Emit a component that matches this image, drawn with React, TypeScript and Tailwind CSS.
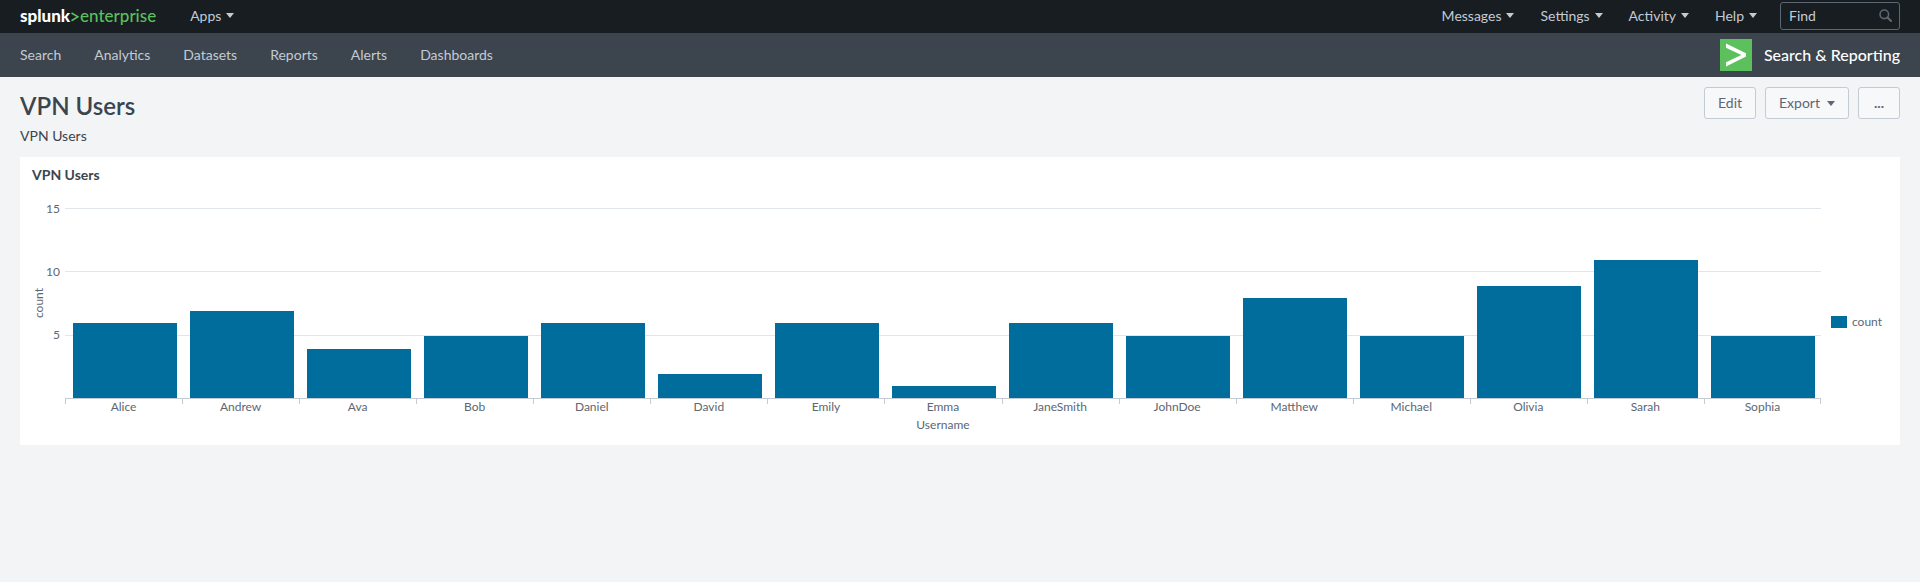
import React from "react";

const navItems = ["Search", "Analytics", "Datasets", "Reports", "Alerts", "Dashboards"];
const menus = ["Messages", "Settings", "Activity", "Help"];

const data = [
  { name: "Alice", count: 6 },
  { name: "Andrew", count: 7 },
  { name: "Ava", count: 4 },
  { name: "Bob", count: 5 },
  { name: "Daniel", count: 6 },
  { name: "David", count: 2 },
  { name: "Emily", count: 6 },
  { name: "Emma", count: 1 },
  { name: "JaneSmith", count: 6 },
  { name: "JohnDoe", count: 5 },
  { name: "Matthew", count: 8 },
  { name: "Michael", count: 5 },
  { name: "Olivia", count: 9 },
  { name: "Sarah", count: 11 },
  { name: "Sophia", count: 5 },
];

const axisMax = 15;
const gridValues = [15, 10, 5];

// Bar height in whole pixels, one pixel short so that it stays under its grid line.
const barHeight = (count: number) => Math.round((count / axisMax) * 189 - 1);

function Caret() {
  return (
    <svg width="8" height="5" viewBox="0 0 8 5" fill="currentColor" aria-hidden="true">
      <path d="M0 0h8L4 5z" />
    </svg>
  );
}

function MenuButton({ label }: { label: string }) {
  return (
    <button type="button" className="flex items-center gap-[5px] text-[#c3cbd4]">
      {label}
      <Caret />
    </button>
  );
}

function Logo() {
  return (
    <a href="#home" className="flex items-center text-[17px] leading-5">
      <span className="font-black text-white">splunk</span>
      <svg width="8" height="10" viewBox="0 0 8 10" fill="none" stroke="#5cc05c" strokeWidth="1.6" aria-hidden="true" className="mx-px mt-0.5">
        <path d="M0.5 1L7 4.8L0.5 8.8" />
      </svg>
      <span className="font-medium text-[#5cc05c]">enterprise</span>
    </a>
  );
}

function TopBar() {
  return (
    <header className="flex h-[33px] items-center justify-between bg-[#171d21] px-5 pb-px">
      <div className="flex items-center gap-[34px] pb-px">
        <Logo />
        <MenuButton label="Apps" />
      </div>
      <div className="flex items-center">
        <div className="flex items-center gap-[26px] pr-[23px] pb-px">
          {menus.map((m) => (
            <MenuButton key={m} label={m} />
          ))}
        </div>
        <label className="flex h-7 w-[120px] items-center rounded-[3px] border border-[#5c6773] pr-[7px] pb-px pl-2">
          <input
            type="text"
            aria-label="Find"
            placeholder="Find"
            className="w-0 flex-1 bg-transparent text-white outline-none placeholder:text-[#c3cbd4]"
          />
          <svg width="13" height="13" viewBox="0 0 13 13" fill="none" stroke="#5c6773" aria-hidden="true">
            <circle cx="5.3" cy="5.3" r="4.3" strokeWidth="1.6" />
            <path d="M8.5 8.5L12 12" strokeWidth="2.2" strokeLinecap="round" />
          </svg>
        </label>
      </div>
    </header>
  );
}

function AppNav() {
  return (
    <nav className="flex h-11 items-center justify-between bg-[#3c444d] px-5">
      <ul className="flex items-center gap-[33px]">
        {navItems.map((n) => (
          <li key={n}>
            <a href={`#${n.toLowerCase()}`} className="text-[#c3cbd4]">
              {n}
            </a>
          </li>
        ))}
      </ul>
      <a href="#app" className="flex items-center gap-3 text-base font-medium text-white">
        <svg width="32" height="32" viewBox="0 0 32 32" aria-hidden="true">
          <path fill="#5cc05c" d="M0 0h32v32H0z" />
          <path fill="#fff" d="M6 4.5L26 14.2V17.6L6 27.5V23.3L21.3 15.9L6 8.7z" />
        </svg>
        Search &amp; Reporting
      </a>
    </nav>
  );
}

function ActionButton({ children }: { children: React.ReactNode }) {
  return (
    <button
      type="button"
      className="flex h-8 items-center gap-[7px] rounded-[3px] border border-[#c3cbd4] bg-[#f7f8fa] px-[13px] text-[#5c6773]"
    >
      {children}
    </button>
  );
}

function ColumnChart() {
  return (
    <div className="flex pr-[18px] pl-3 text-xs leading-4 text-[#5c6773]">
      <div className="flex h-[190px] w-3.5 items-center justify-center">
        <span className="rotate-180 [writing-mode:vertical-rl]">count</span>
      </div>
      <div className="flex h-[190px] w-[14px] flex-col">
        {gridValues.map((v) => (
          <div key={v} className="flex-1">
            <div className="flex h-px items-center justify-end">{v}</div>
          </div>
        ))}
      </div>
      <div className="ml-[5px] flex-1">
        <div className="relative h-[190px]">
          <div className="absolute inset-0 flex flex-col">
            {gridValues.map((v) => (
              <div key={v} className="flex-1 border-t border-[#e1e6eb]" />
            ))}
          </div>
          <div className="relative flex h-full items-end pr-px">
            {data.map((d) => (
              <div key={d.name} className="flex h-full flex-1 items-end pr-[5px] pl-2">
                <div className="w-full bg-[#006d9c]" style={{ height: `${barHeight(d.count)}px` }} />
              </div>
            ))}
          </div>
        </div>
        <div className="flex border-t border-[#c3cbd4]">
          {data.map((d) => (
            <div key={d.name} className="group flex-1">
              <div className="h-[5px] border-l border-[#c3cbd4] group-last:border-r" />
              <div className="-mt-[5px] text-center">{d.name}</div>
            </div>
          ))}
        </div>
        <div className="mt-0.5 text-center">Username</div>
      </div>
      <div className="ml-2.5 flex h-[227px] items-center gap-[5px]">
        <span className="h-3 w-4 bg-[#006d9c]" />
        count
      </div>
    </div>
  );
}

export default function App() {
  return (
    <div className="min-h-screen bg-[#f2f4f5] font-[Lato,sans-serif] text-sm leading-5 text-[#3c444d]">
      <TopBar />
      <AppNav />
      <main className="px-5 pb-5">
        <div className="flex items-start justify-between pt-2.5">
          <div>
            <h1 className="pt-[3px] text-2xl leading-8 font-semibold">VPN Users</h1>
            <p className="mt-1">VPN Users</p>
          </div>
          <div className="flex gap-[9px]">
            <ActionButton>Edit</ActionButton>
            <ActionButton>
              Export
              <Caret />
            </ActionButton>
            <ActionButton>
              <span className="w-3.5 text-center font-bold">...</span>
            </ActionButton>
          </div>
        </div>
        <section className="mt-[11px] bg-white pb-2.5">
          <h2 className="px-3 pt-2 pb-[23px] font-bold">VPN Users</h2>
          <ColumnChart />
        </section>
      </main>
    </div>
  );
}
